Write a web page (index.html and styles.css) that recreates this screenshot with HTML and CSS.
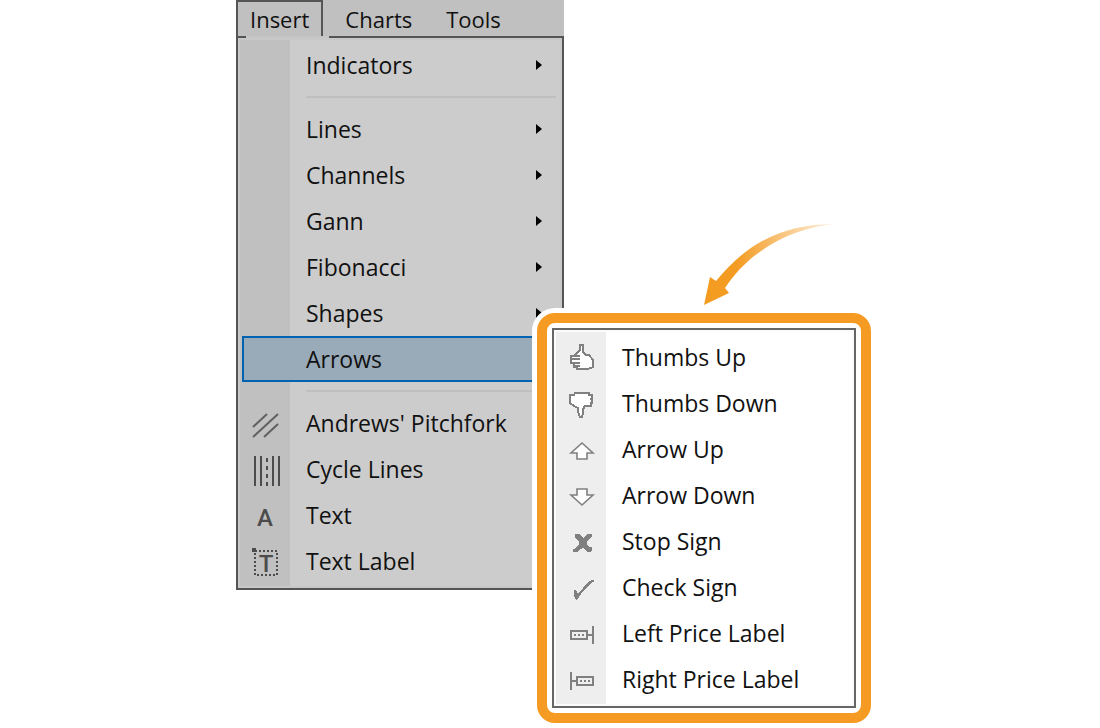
FILE: index.html
```
<!DOCTYPE html>
<html lang="en">
<head>
    <meta charset="UTF-8">
    <meta name="viewport" content="width=device-width, initial-scale=1.0">
    <title>Insert Menu - Arrows</title>
    <link rel="stylesheet" href="styles.css">
</head>
<body>
    <main class="app">
        <nav class="menubar">
            <button class="tab active">Insert</button>
            <button class="tab">Charts</button>
            <button class="tab">Tools</button>
        </nav>

        <div class="dropdown">
            <ul class="menu">
                <li><button class="item more">Indicators</button></li>
                <li class="separator"></li>
                <li><button class="item more">Lines</button></li>
                <li><button class="item more">Channels</button></li>
                <li><button class="item more">Gann</button></li>
                <li><button class="item more">Fibonacci</button></li>
                <li><button class="item more">Shapes</button></li>
                <li class="has-submenu">
                    <button class="item selected">Arrows</button>

                    <div class="highlight">
                        <ul class="menu submenu">
                            <li><button class="item">
                                <svg class="icon" viewBox="0 0 28 28"><path class="paper" d="M12 2h3v7l3 3h3l4 5v7l-5 2H9v-2H6v-4H3v-7h3l6-6z"/><path d="M3 13h9M3 16h9M3 20h9M6 23h6"/></svg>
                                Thumbs Up</button></li>
                            <li><button class="item">
                                <svg class="icon" viewBox="0 0 28 28"><path class="paper" d="M7 4h14v2h3v4h-2 2v4h-2 1v3h-6l-2 3v4l-1 4h-2l-2-5v-4l-4-2-4-3V6h4z"/></svg>
                                Thumbs Down</button></li>
                            <li><button class="item">
                                <svg class="icon outline" viewBox="0 0 28 28"><path class="paper" d="M9 18H3L14 8l11 10h-6v6H9z"/></svg>
                                Arrow Up</button></li>
                            <li><button class="item">
                                <svg class="icon outline" viewBox="0 0 28 28"><path class="paper" d="M9 8h10v6h6L14 24 3 14h6z"/></svg>
                                Arrow Down</button></li>
                            <li><button class="item">
                                <svg class="icon" viewBox="0 0 28 28"><path class="solid" d="M7 7h5l3 4 4-4h5v3l-5 4v3l2 3h3v3l-2 2h-3l-4-4-4 2-2 2H5v-3l3-1 3-4v-3l-4-3z"/></svg>
                                Stop Sign</button></li>
                            <li><button class="item">
                                <svg class="icon" viewBox="0 0 28 28"><path class="solid" d="M6 17h2l2 4L20 9l4-2h2v2h-2L13 21l-4 6H8l-2-4z"/></svg>
                                Check Sign</button></li>
                            <li><button class="item">
                                <svg class="icon" viewBox="0 0 28 28"><path d="M3 12h16v8H3zM19 16h6M25 7v18"/><path stroke-dasharray="2 2" d="M6 16h10"/></svg>
                                Left Price Label</button></li>
                            <li><button class="item">
                                <svg class="icon" viewBox="0 0 28 28"><path d="M9 12h16v8H9zM3 16h6M3 7v18"/><path stroke-dasharray="2 2" d="M12 16h10"/></svg>
                                Right Price Label</button></li>
                        </ul>
                    </div>

                    <svg class="pointer" viewBox="0 0 134 84">
                        <defs>
                            <linearGradient id="fade" x1="0" y1="0" x2="1" y2="0">
                                <stop offset="0.25" stop-color="#f49b22"/>
                                <stop offset="1" stop-color="#f49b22" stop-opacity="0.1"/>
                            </linearGradient>
                        </defs>
                        <path fill="url(#fade)" d="M1 82L7 54l6 4C44 20 80 1 132 1 88 5 46 28 22 65l4 5z"/>
                    </svg>
                </li>
                <li class="separator"></li>
                <li><button class="item">
                    <svg class="icon" viewBox="0 0 28 28"><path class="hatch" d="M2 18L16 5M2 28L27 5M13 28L27 15"/></svg>
                    Andrews' Pitchfork</button></li>
                <li><button class="item">
                    <svg class="icon" viewBox="0 0 28 28"><path d="M4 1v30M10 1v30M22 1v30M28 1v30"/><path stroke-dasharray="4 4" d="M16 3v28"/></svg>
                    Cycle Lines</button></li>
                <li><button class="item">
                    <svg class="icon" viewBox="0 0 28 28"><text class="letter" x="14" y="25">A</text></svg>
                    Text</button></li>
                <li><button class="item">
                    <svg class="icon" viewBox="0 0 28 28"><path stroke-dasharray="2 2" d="M4 4h22v24H4z"/><path class="solid" d="M1 1h4v4H1z"/><text class="letter" x="15" y="25">T</text></svg>
                    Text Label</button></li>
            </ul>
        </div>
    </main>
</body>
</html>
```

FILE: styles.css
```
* {
    box-sizing: border-box;
}

body {
    margin: 0;
    min-height: 100vh;
    background: #fff;
    color: #111;
    font-family: "Open Sans", "Noto Sans", sans-serif;
    font-size: 23px;
}

button {
    margin: 0;
    border: none;
    background: none;
    color: inherit;
    font: inherit;
    text-align: left;
    white-space: nowrap;
    cursor: pointer;
}

.app {
    width: 328px;
    min-height: 100vh;
    margin-left: 236px;
}

/* Menu bar */
.menubar {
    display: flex;
    gap: 10px;
    height: 36px;
    background: #c0c0c0;
    font-size: 22px;
}

.tab {
    padding: 2px 12px 0;
    line-height: 34px;
}

.tab.active {
    position: relative;
    padding: 0 12px;
    border: 2px solid #555;
    border-bottom: none;
}

/* opens the tab into the menu below it */
.tab.active::after {
    content: "";
    position: absolute;
    left: 8px;
    right: -8px;
    bottom: -2px;
    height: 2px;
    background: #c6c6c6;
}

/* Menus */
.dropdown {
    padding: 2px;
    border: 2px solid #555;
    background: #c8c8c8;
}

.menu {
    margin: 0;
    padding: 2px 4px 2px 2px;
    list-style: none;
    background: linear-gradient(to right, #c0c0c0 50px, #ccc 50px);
}

.item {
    display: flex;
    align-items: center;
    width: 100%;
    height: 46px;
    padding: 0 14px 0 64px;
}

.item.more {
    justify-content: space-between;
}

.item.more::after {
    content: "";
    border: 5px solid transparent;
    border-left: 6px solid #000;
    border-right: none;
}

.item.selected {
    border: 2px solid #0063b1;
    background: #99aab8;
    padding-left: 62px;
}

.separator {
    height: 18px;
    padding: 8px 0 8px 64px;
}

.separator::before {
    content: "";
    display: block;
    height: 2px;
    background: #bfbfbf;
}

/* Icons */
.icon {
    flex: none;
    width: 28px;
    height: 28px;
    margin: 0 27px 0 -55px;
    overflow: visible;
    fill: none;
    stroke: #4c4c4c;
    stroke-width: 2;
    shape-rendering: crispEdges;
}

.icon .paper {
    fill: #fff;
}

.icon .solid,
.icon .letter {
    fill: #4c4c4c;
    stroke: none;
}

.icon .hatch {
    stroke: #606060;
    shape-rendering: auto;
}

.icon .letter {
    font: 500 24px Roboto, sans-serif;
    text-anchor: middle;
}

/* Submenu */
.has-submenu {
    position: relative;
}

.highlight {
    position: absolute;
    top: -23px;
    left: 295px;
    z-index: 1;
    width: 334px;
    padding: 5px;
    border: 10px solid #f59b23;
    border-radius: 18px;
    background: #fff;
    box-shadow: 0 0 0 5px #fff;
}

.submenu {
    border: 2px solid #666;
    padding: 4px;
    background: linear-gradient(to right, #eee 52px, #fff 52px);
    box-shadow: inset 0 0 0 2px #fbfbfb;
}

.submenu .icon {
    margin: 0 26px 0 -54px;
    stroke: #808080;
}

.submenu .icon.outline {
    stroke-width: 1.6;
    shape-rendering: auto;
}

.submenu .icon .solid {
    fill: #808080;
}

.pointer {
    position: absolute;
    top: -113px;
    left: 461px;
    width: 134px;
    height: 84px;
}
```
